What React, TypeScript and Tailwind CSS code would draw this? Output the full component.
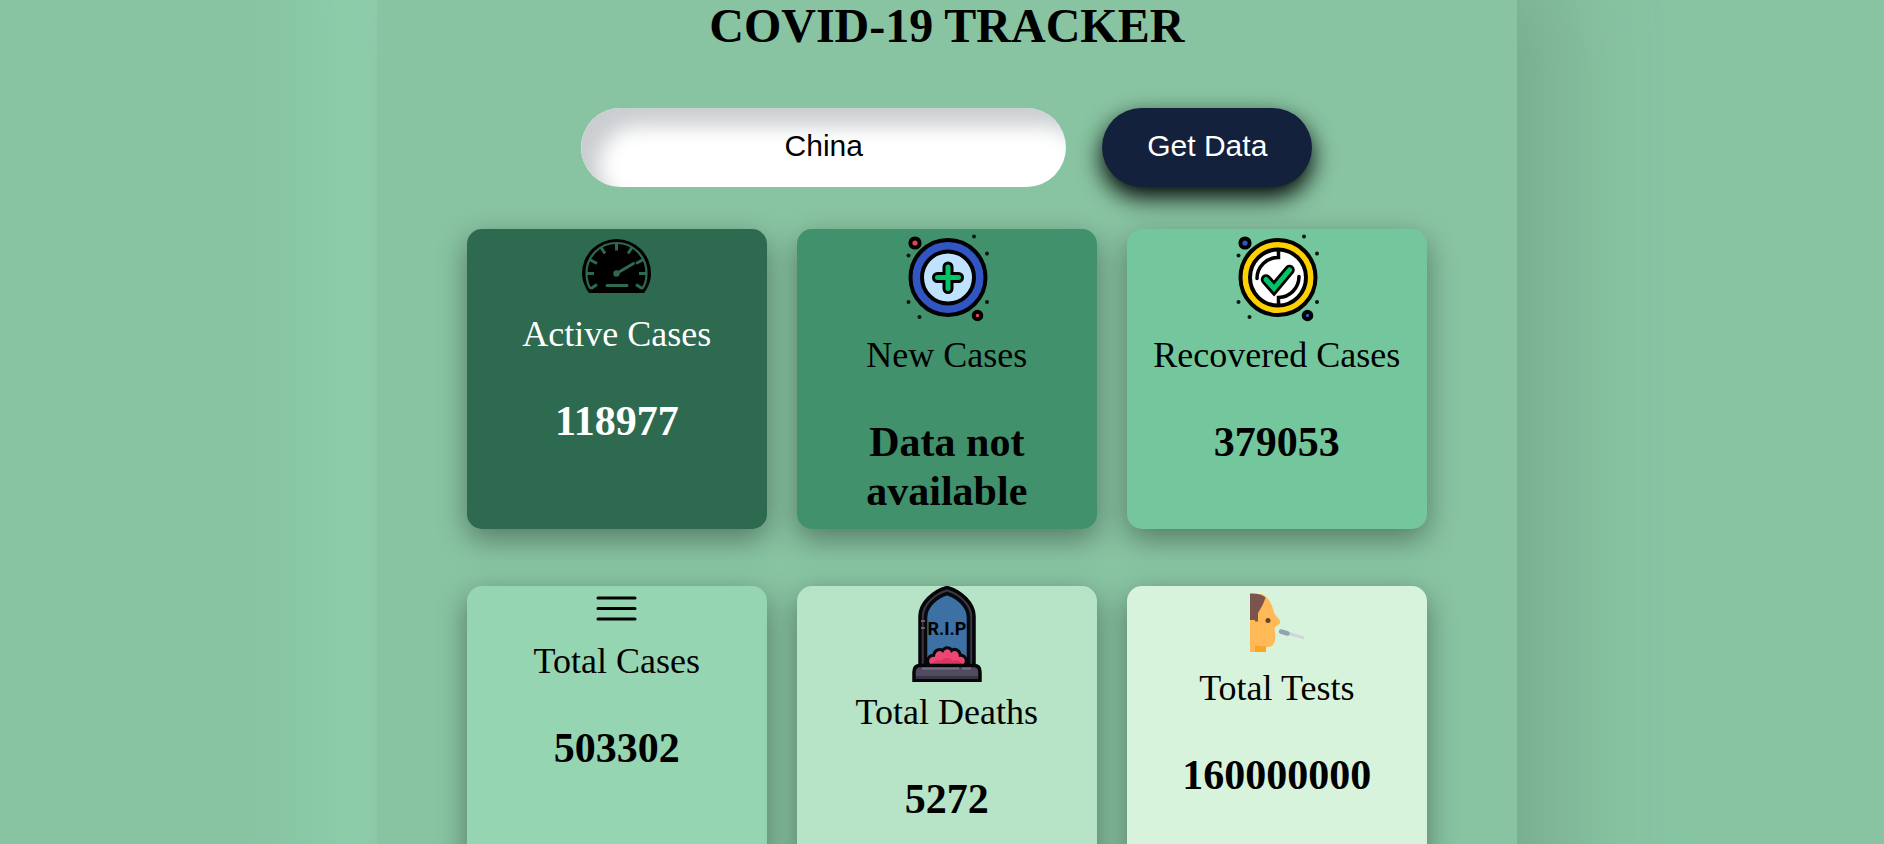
import { useState } from "react";
import type { ReactNode } from "react";

function GaugeIcon() {
  return (
    <svg viewBox="-3 0.500 120 75" className="h-[75px] w-[120px]" aria-hidden="true">
      <path d="M29 64.500C24 58 22 50 22 45a34.500 34.500 0 0 1 69 0c0 6-2 13-7 19.500z" fill="#000" />
      <g fill="none" stroke="#2d6a4f">
        <path d="M31 60.500C27 56 26.500 50 26.500 44.500a30 30 0 0 1 60 0c0 6-.5 11-4.500 16" strokeWidth="2.200" />
        <path d="M27 45h7M79 45h7M56.500 15v7M29.500 31l7.500 4M83.500 31l-7.500 4M41 19l4 6M72 19l-4 6M31 60l6-4M82 60l-6-4" strokeWidth="3" />
      </g>
      <path d="M56.500 45L73.500 35M47 57h20" stroke="#2d6a4f" strokeWidth="3" strokeLinecap="round" />
      <circle cx="56.500" cy="45" r="3.200" fill="#2d6a4f" />
    </svg>
  );
}

function Sparks({ color }: { color: string }) {
  return (
    <>
      <circle cx="25" cy="14" r="4.600" fill={color} stroke="#000" strokeWidth="4" />
      <circle cx="87.500" cy="86.500" r="3.800" fill={color} stroke="#000" strokeWidth="4" />
      <g fill="#0b1710">
        <circle cx="84" cy="7.500" r="2" />
        <circle cx="97" cy="24.500" r="2" />
        <circle cx="18.500" cy="26.500" r="2" />
        <circle cx="18.500" cy="73" r="2" />
        <circle cx="97" cy="73" r="2" />
        <circle cx="29.500" cy="88" r="2" />
      </g>
    </>
  );
}

function PlusIcon() {
  return (
    <svg viewBox="-1 0 116 96" className="h-24 w-[116px]" aria-hidden="true">
      <circle cx="58" cy="48.500" r="37.500" fill="#3156c4" stroke="#000" strokeWidth="4" />
      <circle cx="58" cy="48.500" r="26" fill="#bfe3ff" stroke="#000" strokeWidth="4" />
      <path d="M58 38v21.500M47.500 48.500h21" stroke="#000" strokeWidth="11" strokeLinecap="round" />
      <path d="M58 38v21.500M47.500 48.500h21" stroke="#00c465" strokeWidth="5" strokeLinecap="round" />
      <Sparks color="#e5414f" />
    </svg>
  );
}

function CheckIcon() {
  return (
    <svg viewBox="-1 0 116 96" className="h-24 w-[116px]" aria-hidden="true">
      <circle cx="58" cy="48.500" r="37.500" fill="#ffd000" stroke="#000" strokeWidth="4" />
      <circle cx="58" cy="48.500" r="28" fill="#fff" stroke="#000" strokeWidth="4" />
      <path d="M58.500 21v7.500A21 21 0 0 0 37 49.500M58.500 76v-7.500A21 21 0 0 0 79 47.500" fill="none" stroke="#000" strokeWidth="3.500" strokeLinecap="round" />
      <path d="M46 50.500l8 9L69.500 41" fill="none" stroke="#000" strokeWidth="10.500" strokeLinecap="round" />
      <path d="M46 50.500l8 9L69.500 41" fill="none" stroke="#00c465" strokeWidth="5" strokeLinecap="round" />
      <Sparks color="#3156c4" />
    </svg>
  );
}

function LinesIcon() {
  return (
    <svg viewBox="0 0 60 45" className="h-[45px] w-[60px]" aria-hidden="true">
      <path d="M11 12h37M11 22.500h37M11 33h37" stroke="#000" strokeWidth="3" strokeLinecap="round" />
    </svg>
  );
}

function TombIcon() {
  return (
    <svg viewBox="0 0 96 96" className="size-24" aria-hidden="true">
      <path d="M21 80V30C21 18 34 5 48 1.500 62 5 75 18 75 30v50z" fill="#3a3644" stroke="#050507" strokeWidth="3.500" />
      <path d="M26.500 78V32C26.500 20 37 11 48 7.500 59 11 69.500 20 69.500 32v46z" fill="#3d70a3" stroke="#07090c" strokeWidth="3.500" />
      <path d="M22 35h4M22 42h4" stroke="#7d7889" strokeWidth="1.500" />
      <text x="48" y="49" textAnchor="middle" fontSize="18" className="font-['Roboto','Liberation_Sans',sans-serif] font-bold">
        R.I.P
      </text>
      <path d="M32 79c-4-4-1-9 4-8 0-6 6-8 8-4 2-5 7-5 8 0 3-4 8-2 8 4 5-1 8 4 4 8z" fill="#ef4474" stroke="#07090c" strokeWidth="6" />
      <path d="M32 79c-4-4-1-9 4-8 0-6 6-8 8-4 2-5 7-5 8 0 3-4 8-2 8 4 5-1 8 4 4 8z" fill="#ef4474" />
      <path d="M33 78c3-4 7-5 9-3 3-4 9-4 12 0 3-2 7-1 9 3z" fill="#d93766" />
      <path d="M15 94.500V86q0-6.500 6-6.500h54q6 0 6 6.500v8.500z" fill="#514b5f" stroke="#050507" strokeWidth="3.500" />
      <path d="M17 90h62v3H17z" fill="#3a3546" />
      <path d="M23 82.500h37M63 82.500h9" stroke="#77718a" strokeWidth="2" />
    </svg>
  );
}

function SwabIcon() {
  return (
    <svg viewBox="0 0 60 72" className="h-[72px] w-[60px]" aria-hidden="true">
      <path d="M3 8h12c6 3 9 8 11 15 1 5 3 7 5 9 3 4 4 5-3 9-1 4 1 8 0 13-1 6-4 7-10 7v5H3z" fill="#ffb957" />
      <path d="M8 59q5 2 11 1v6H8z" fill="#faa526" />
      <path d="M3 7.500c7-.5 12 1 15.500 4C17 17 13 24 11 27v8.500H8V34H3z" fill="#7a544d" />
      <circle cx="21" cy="34.500" r="2.500" fill="#6b451f" />
      <path d="M42 47.500l15 4.500" stroke="#d0d5de" strokeWidth="3" />
      <path d="M34 45.500l6.500 2" stroke="#91a2b2" strokeWidth="4.500" strokeLinecap="round" />
    </svg>
  );
}

type Stat = { label: string; value: string; tone: string; icon: ReactNode };

const stats: Stat[] = [
  { label: "Active Cases", value: "118977", tone: "bg-[#2d6a4f] text-white", icon: <GaugeIcon /> },
  { label: "New Cases", value: "Data not available", tone: "bg-[#40916c] text-black", icon: <PlusIcon /> },
  { label: "Recovered Cases", value: "379053", tone: "bg-[#74c69d] text-black", icon: <CheckIcon /> },
  { label: "Total Cases", value: "503302", tone: "bg-[#95d5b2] text-black", icon: <LinesIcon /> },
  { label: "Total Deaths", value: "5272", tone: "bg-[#b7e4c7] text-black", icon: <TombIcon /> },
  { label: "Total Tests", value: "160000000", tone: "bg-[#d8f3dc] text-black", icon: <SwabIcon /> },
];

function StatCard({ label, value, tone, icon }: Stat) {
  return (
    <article className={`flex min-h-[300px] flex-col items-center rounded-[15px] text-center shadow-[0_10px_30px_rgba(0,0,0,0.38)] ${tone}`}>
      {icon}
      <h2 className="mt-[9px] text-[36px] leading-[42px]">{label}</h2>
      <p className="mt-[42px] px-10 text-[42px] leading-[49px] font-bold">{value}</p>
    </article>
  );
}

export default function App() {
  const [country, setCountry] = useState("China");
  return (
    <div className="min-h-screen overflow-hidden bg-[#88c4a2] font-['Liberation_Serif',serif] text-black">
      <main className="-mt-20 ml-[20%] max-w-[1140px] bg-[#88c4a2] px-[90px] pt-20 pb-40 shadow-[45px_45px_90px_#78ac8f,-45px_-45px_90px_#93d3b0]">
        <h1 className="text-center text-[48px] leading-[52px] font-bold">COVID-19 TRACKER</h1>
        <form className="mt-14 flex justify-center gap-9" onSubmit={(e) => e.preventDefault()}>
          <input
            type="text"
            aria-label="Country"
            value={country}
            onChange={(e) => setCountry(e.target.value)}
            className="h-[79px] w-[485px] rounded-[40px] bg-white pb-[4px] text-center font-['Liberation_Sans',sans-serif] text-[30px] shadow-[inset_18px_18px_20px_#cbced1] outline-none"
          />
          <button
            type="submit"
            className="h-[79px] w-[210px] rounded-[40px] bg-[#14213d] pb-[4px] font-['Liberation_Sans',sans-serif] text-[30px] text-white shadow-[0_10px_25px_black]"
          >
            Get Data
          </button>
        </form>
        <section className="mt-[42px] grid grid-cols-3 gap-x-[30px] gap-y-[57px]">
          {stats.map((s) => (
            <StatCard key={s.label} {...s} />
          ))}
        </section>
      </main>
    </div>
  );
}
